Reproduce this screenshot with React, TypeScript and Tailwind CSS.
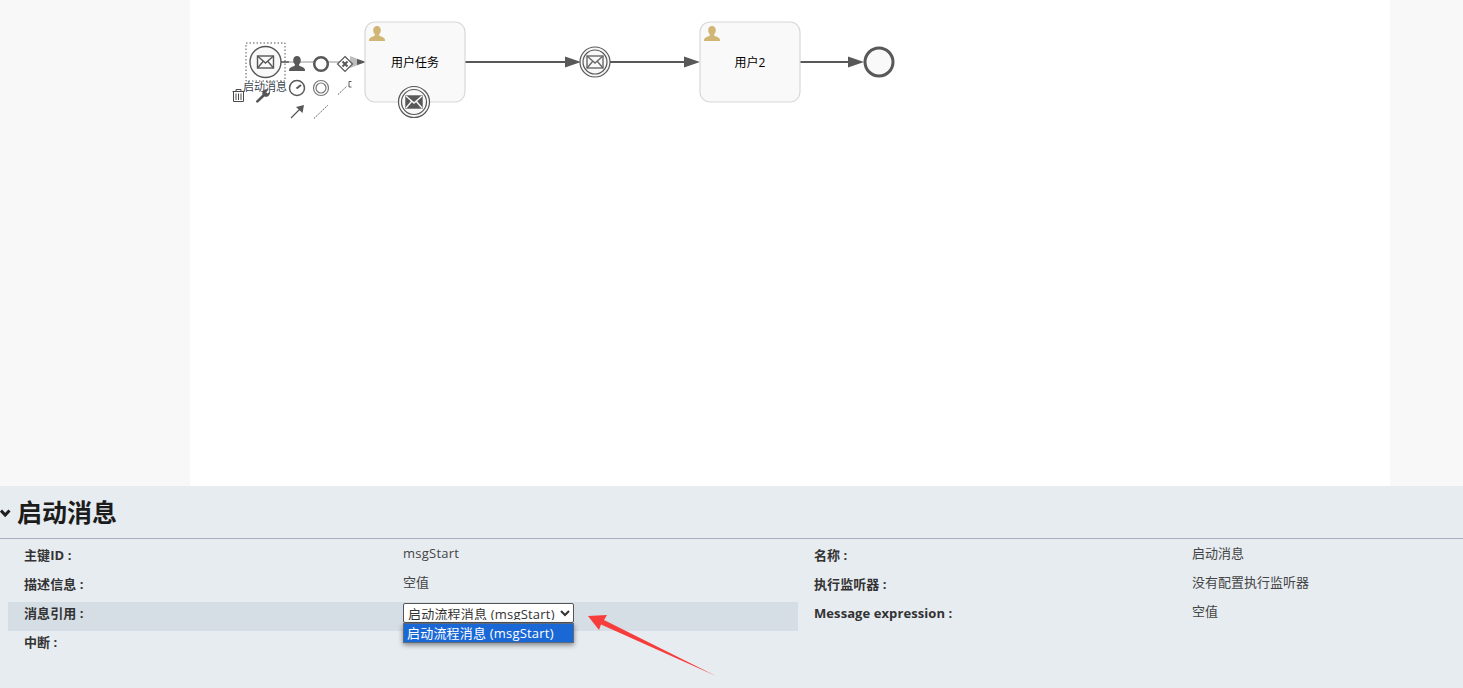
const FONT = `font-['Open_Sans','Noto_Sans_CJK_SC',sans-serif]`;

// small envelope used by the message events
const Envelope = ({ x, y, w, h, color, fill = "none" }: { x: number; y: number; w: number; h: number; color: string; fill?: string }) => (
  <g stroke={color} fill={fill} strokeWidth="1.4">
    <rect x={x} y={y} width={w} height={h} />
    <path d={`M${x} ${y}L${x + w / 2} ${y + h / 2 + 1}L${x + w} ${y}M${x} ${y + h}L${x + w / 2 - 2} ${y + h / 2 - 1}M${x + w} ${y + h}L${x + w / 2 + 2} ${y + h / 2 - 1}`} stroke={fill === "none" ? color : "#f9f9f9"} fill="none" />
  </g>
);

const UserIcon = ({ x, y, color }: { x: number; y: number; color: string }) => (
  <path
    transform={`translate(${x} ${y})`}
    fill={color}
    d="M8 0C5.6 0 4.2 1.8 4.2 4.2C4.2 6 4.9 7.4 5.9 8.2C6 9.2 5.7 9.8 4.6 10.3C2.6 11 0.5 11.6 0 13.8C0 14.2 0 15 0 15L16 15C16 15 16 14.2 16 13.8C15.5 11.6 13.4 11 11.4 10.3C10.3 9.8 10 9.2 10.1 8.2C11.1 7.4 11.8 6 11.8 4.2C11.8 1.8 10.4 0 8 0Z"
  />
);

const Task = ({ x, label }: { x: number; label: string }) => (
  <g>
    <rect x={x} y={22} width={100} height={80} rx={10} fill="#f9f9f9" stroke="#d8d8d8" strokeWidth="1.200" />
    <UserIcon x={x + 4} y={26} color="#d1b574" />
    <text x={x + 50} y={67} textAnchor="middle" fontSize="12" fill="#000">{label}</text>
  </g>
);

const Diagram = () => (
  <svg width="1200" height="486" viewBox="190 0 1200 486" className={`block ${FONT}`}>
    {/* flows */}
    <path d="M280 62H352" stroke="#c9c9c9" strokeWidth="2" />
    <path d="M350 56L366 62L350 68Z" fill="#bdbdbd" />
    <path d="M357 59L366 62L357 65Z" fill="#585858" />
    <path d="M465 62H566M610 62H686M800 62H850" stroke="#585858" strokeWidth="2" />
    <path d="M565 56.500L581 62L565 67.500ZM684 56.500L700 62L684 67.500ZM848 56.500L864 62L848 67.500Z" fill="#585858" />

    {/* start event */}
    <circle cx="265.500" cy="62" r="15.500" fill="#f9f9f9" stroke="#585858" strokeWidth="1.400" />
    <Envelope x={257.500} y={56} w={16} h={12} color="#585858" />
    <rect x="246" y="43" width="39" height="38" fill="none" stroke="#555" strokeDasharray="1.500 2" />
    <path d="M281 62H289" stroke="#585858" strokeWidth="1.500" />
    <text x="265" y="91" textAnchor="middle" fontSize="11" fill="#3c4650">启动消息</text>

    {/* context pad */}
    <UserIcon x={289} y={56} color="#585858" />
    <circle cx="321" cy="64" r="6.800" fill="#fff" stroke="#585858" strokeWidth="2.500" />
    <path d="M345 56.500L352.500 64L345 71.500L337.500 64Z" fill="#fff" stroke="#585858" strokeWidth="1.200" />
    <path d="M342.500 61.500L347.500 66.500M347.500 61.500L342.500 66.500" stroke="#585858" strokeWidth="2" />
    <circle cx="297" cy="88" r="7.500" fill="#fff" stroke="#585858" strokeWidth="1.500" />
    <path d="M296.500 88.500L301 85" stroke="#585858" strokeWidth="2" />
    <circle cx="321" cy="88" r="7.500" fill="#fff" stroke="#777" strokeWidth="1.200" />
    <circle cx="321" cy="88" r="5" fill="none" stroke="#777" strokeWidth="1.200" />
    <path d="M338 94.500L347 86" stroke="#585858" strokeDasharray="1.500 1" />
    <path d="M351.500 81.500H349V87H351.500" fill="none" stroke="#585858" />
    <path d="M291 118L300 109" stroke="#585858" strokeWidth="1.200" />
    <path d="M304 105L302.500 113L296 107Z" fill="#585858" />
    <path d="M314 118.500L328 105" stroke="#585858" strokeDasharray="1.500 1" />

    {/* trash */}
    <g stroke="#4a4a4a" fill="none" strokeWidth="1">
      <path d="M232.500 91.500H244.500M236 91V89.500H241V91M233.500 92V101.500H243.500V92M236 93.500V100M238.500 93.500V100M241 93.500V100" />
    </g>
    {/* wrench */}
    <path d="M256 101L262.500 94.500C261.500 91.500 264 88.500 268.500 89.500L266 92L267.500 93.500L270 91.500C270.500 95.500 267.500 97.500 264.500 96.500L258 102.500C257 103 255.500 102 256 101Z" fill="#555" />

    {/* tasks */}
    <Task x={365} label="用户任务" />
    <Task x={700} label="用户2" />

    {/* boundary message event */}
    <circle cx="414" cy="102" r="15.500" fill="#f9f9f9" stroke="#585858" strokeWidth="1.200" />
    <circle cx="414" cy="102" r="12.500" fill="#f9f9f9" stroke="#585858" strokeWidth="1.200" />
    <Envelope x={406} y={96} w={16} h={12} color="#585858" fill="#585858" />

    {/* intermediate catch */}
    <circle cx="595" cy="62" r="15" fill="#f9f9f9" stroke="#585858" strokeWidth="1.200" />
    <circle cx="595" cy="62" r="12" fill="#f9f9f9" stroke="#585858" strokeWidth="1.200" />
    <Envelope x={587} y={56} w={16} h={12} color="#6a6a6a" />

    {/* end event */}
    <circle cx="879" cy="62" r="14" fill="#f9f9f9" stroke="#585858" strokeWidth="3" />
  </svg>
);

const Prop = ({ label, children, active, labelW }: { label: string; children?: React.ReactNode; active?: boolean; labelW: string }) => (
  <div className={`flex h-[29px] ${active ? "bg-[#d5dde5]" : ""}`}>
    <div className={`${labelW} pl-4 pt-[1px] text-[13px] leading-[20px] font-bold tracking-[0.08px] text-[#333]`}>{label}</div>
    <div className="flex-1 text-[13px] leading-[20px] text-[#444]">{children}</div>
  </div>
);

export default function App() {
  return (
    <div className={`relative h-[688px] w-[1463px] overflow-hidden bg-[#f8f8f8] ${FONT}`}>
      <div className="h-[486px] w-full pl-[190px]">
        <div className="h-full w-[1200px] bg-white">
          <Diagram />
        </div>
      </div>

      <div className="h-[202px] bg-[#e7ecf1]">
        <div className="flex h-[53px] items-center border-b border-[#a9afc1]">
          <svg width="11" height="9" viewBox="0 0 11 9" className="mt-[3px] shrink-0">
            <path d="M1 1.500L5.200 6L9.500 1.500" fill="none" stroke="#1f1f1f" strokeWidth="3" />
          </svg>
          <h1 className="ml-[6px] text-[25px] leading-[53px] font-bold text-[#1c1c1c]">启动消息</h1>
        </div>

        <div className="flex pt-[5px] pl-2">
          <div className="w-[790px]">
            <Prop label="主键ID :" labelW="w-[395px]">
              <span className="relative -top-[1px] tracking-[0.25px]">msgStart</span>
            </Prop>
            <Prop label="描述信息 :" labelW="w-[395px]">
              <span className="relative -top-[1px]">空值</span>
            </Prop>
            <Prop label="消息引用 :" labelW="w-[395px]" active>
              <div className="relative pt-[1px]">
                <select className="h-[20px] w-[171px] rounded-[2px] border border-[#555] bg-white pb-[2px] pl-0 text-[13px] leading-[16px] tracking-[0.2px] text-[#333]">
                  <option>启动流程消息 (msgStart)</option>
                </select>
                <div className="absolute top-[21px] left-0 z-10 h-[20px] w-[171px] border border-[#5a6b80] bg-[#1a68d6] pl-[3px] text-[13px] leading-[18px] tracking-[0.2px] text-white shadow-[0_2px_5px_rgba(0,0,0,0.45)]">
                  启动流程消息 (msgStart)
                </div>
              </div>
            </Prop>
            <Prop label="中断 :" labelW="w-[395px]" />
          </div>
          <div className="flex-1">
            <Prop label="名称 :" labelW="w-[394px]">
              <span className="relative -top-[1px]">启动消息</span>
            </Prop>
            <Prop label="执行监听器 :" labelW="w-[394px]">
              <span className="relative -top-[1px]">没有配置执行监听器</span>
            </Prop>
            <Prop label="Message expression :" labelW="w-[394px]">
              <span className="relative -top-[1px]">空值</span>
            </Prop>
          </div>
        </div>
      </div>

      {/* red annotation arrow */}
      <svg width="1463" height="688" viewBox="0 0 1463 688" className="pointer-events-none absolute top-0 left-0 z-20">
        <path d="M588 616L607 615L604 620L716 676L601 624.500L599 630Z" fill="#f73c3c" />
      </svg>
    </div>
  );
}
